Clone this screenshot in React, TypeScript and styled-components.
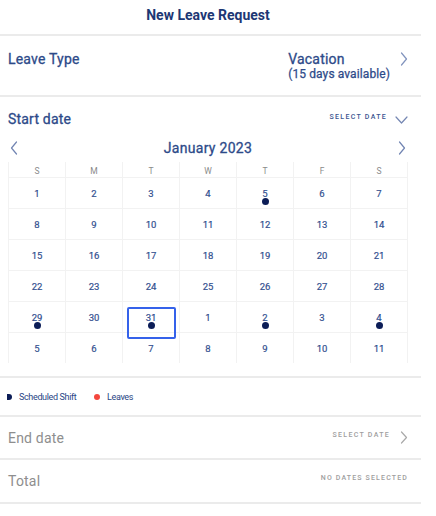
import React from 'react';
import styled, { createGlobalStyle } from 'styled-components';

const Global = createGlobalStyle`
  * { box-sizing: border-box; }
  html, body { margin: 0; padding: 0; background: #fff; }
  body { font-family: Roboto, "Noto Sans", Arial, sans-serif; }
`;

const NAVY = '#2d4a89';
const TITLE = '#1d3774';
const GRAY = '#8e8e8e';
const LINE = '#ebebeb';

const Page = styled.div`
  width: 421px;
  background: #fff;
`;

const Header = styled.header`
  height: 36px;
  padding: 7px 13px 0 8px;
  border-bottom: 2px solid ${LINE};
  display: flex;
  justify-content: center;
  align-items: flex-start;
`;

const Title = styled.h1`
  margin: 0;
  font-size: 14px;
  line-height: 16px;
  font-weight: 700;
  color: ${TITLE};
`;

const LeaveTypeRow = styled.section`
  height: 61px;
  padding: 15px 13px 0 8px;
  border-bottom: 2px solid ${LINE};
  display: flex;
  justify-content: space-between;
  align-items: flex-start;
`;

const Label = styled.span<{ $muted?: boolean }>`
  font-size: 14px;
  line-height: 16px;
  font-weight: 400;
  letter-spacing: 0.2px;
  color: ${(p) => (p.$muted ? GRAY : NAVY)};
  -webkit-text-stroke: ${(p) => (p.$muted ? '0' : `0.3px ${NAVY}`)};
`;

const RightGroup = styled.div<{ $gap: number }>`
  display: flex;
  align-items: flex-start;
  gap: ${(p) => p.$gap}px;
`;

const ValueColumn = styled.div`
  display: flex;
  flex-direction: column;
`;

const ValueMain = styled.span`
  font-size: 14px;
  line-height: 16px;
  font-weight: 400;
  letter-spacing: 0.2px;
  color: ${NAVY};
  -webkit-text-stroke: 0.3px ${NAVY};
`;

const ValueSub = styled.span`
  font-size: 12px;
  line-height: 15px;
  font-weight: 400;
  color: ${NAVY};
  letter-spacing: 0.1px;
  -webkit-text-stroke: 0.25px ${NAVY};
`;

const Caps = styled.span<{ $muted?: boolean }>`
  font-size: 7px;
  line-height: 9px;
  font-weight: 500;
  letter-spacing: 1.3px;
  text-transform: uppercase;
  color: ${(p) => (p.$muted ? '#9e9e9e' : '#3b5590')};
`;

const StartSection = styled.section`
  padding: 0 13px 13px 8px;
  border-bottom: 2px solid ${LINE};
  display: flex;
  flex-direction: column;
`;

const SectionHeader = styled.div`
  height: 41px;
  display: flex;
  justify-content: space-between;
  align-items: center;
  padding-top: 2px;
`;

const MonthNav = styled.div`
  height: 20px;
  margin-bottom: 4px;
  display: flex;
  justify-content: space-between;
  align-items: center;
  padding: 0 2px;
`;

const MonthTitle = styled.span`
  font-size: 14px;
  line-height: 16px;
  font-weight: 400;
  letter-spacing: 0.3px;
  color: ${NAVY};
  -webkit-text-stroke: 0.3px ${NAVY};
`;

const Grid = styled.div`
  width: 400px;
  border-left: 1px solid #f2f2f2;
  display: flex;
  flex-direction: column;
`;

const WeekRow = styled.div<{ $head?: boolean }>`
  display: grid;
  grid-template-columns: repeat(7, 57px);
  height: ${(p) => (p.$head ? 15 : 31)}px;
  border-top: ${(p) => (p.$head ? 'none' : '1px solid #f2f2f2')};
`;

const Cell = styled.div<{ $head?: boolean }>`
  position: relative;
  border-right: 1px solid #f2f2f2;
  display: flex;
  justify-content: center;
  align-items: center;
  padding-top: ${(p) => (p.$head ? 3 : 1)}px;
`;

const WeekDay = styled.span`
  font-size: 8.5px;
  line-height: 10px;
  color: #8a8a8a;
`;

const DayNum = styled.span`
  position: relative;
  font-size: 9.5px;
  line-height: 11px;
  font-weight: 400;
  color: #33508f;
  -webkit-text-stroke: 0.2px #33508f;
`;

const ShiftDot = styled.span`
  position: absolute;
  top: 10px;
  left: 50%;
  width: 7px;
  height: 7px;
  margin-left: -3.5px;
  border-radius: 50%;
  background: #0c1d57;
`;

const SelectedBox = styled.span`
  position: absolute;
  left: 4px;
  top: 5px;
  width: 49px;
  height: 32px;
  border: 2px solid #3562ea;
  border-radius: 2px;
`;

const Legend = styled.section`
  height: 39px;
  padding: 0 13px 0 7px;
  border-bottom: 2px solid ${LINE};
  display: flex;
  align-items: center;
`;

const LegendItem = styled.div<{ $gap: number; $width?: number }>`
  display: flex;
  align-items: center;
  gap: ${(p) => p.$gap}px;
  width: ${(p) => (p.$width ? `${p.$width}px` : 'auto')};
`;

const HalfDot = styled.span`
  width: 5px;
  height: 6px;
  border-radius: 0 3px 3px 0;
  background: #0c1d57;
`;

const RedDot = styled.span`
  width: 6px;
  height: 6px;
  border-radius: 50%;
  background: #f4473d;
`;

const LegendText = styled.span`
  font-size: 9px;
  line-height: 10px;
  letter-spacing: -0.35px;
  color: #2a4585;
`;

const InfoRow = styled.section<{ $h: number }>`
  height: ${(p) => p.$h}px;
  padding: 0 13px 0 8px;
  border-bottom: 2px solid ${LINE};
  display: flex;
  justify-content: space-between;
  align-items: center;
`;

const RaisedCaps = styled(Caps)`
  margin-bottom: 6px;
  letter-spacing: 1.15px;
`;

const ChevronRight = ({ color, w = 8, h = 14 }: { color: string; w?: number; h?: number }) => (
  <svg width={w} height={h} viewBox={`0 0 ${w} ${h}`} fill="none" style={{ display: 'block' }}>
    <polyline
      points={`1.5,1 ${w - 1.5},${h / 2} 1.5,${h - 1}`}
      stroke={color}
      strokeWidth={1.2}
      strokeLinecap="round"
      strokeLinejoin="round"
    />
  </svg>
);

const ChevronLeft = ({ color }: { color: string }) => (
  <svg width={8} height={14} viewBox="0 0 8 14" fill="none" style={{ display: 'block' }}>
    <polyline points="6.5,1 1.5,7 6.5,13" stroke={color} strokeWidth={1.2} strokeLinecap="round" strokeLinejoin="round" />
  </svg>
);

const ChevronDown = ({ color }: { color: string }) => (
  <svg width={13} height={8} viewBox="0 0 13 8" fill="none" style={{ display: 'block', marginTop: 3 }}>
    <polyline points="1,1 6.5,7 12,1" stroke={color} strokeWidth={1.2} strokeLinecap="round" strokeLinejoin="round" />
  </svg>
);

type Day = { n: number; dot?: boolean; selected?: boolean };

const weeks: Day[][] = [
  [1, 2, 3, 4, 5, 6, 7].map((n) => ({ n, dot: n === 5 })),
  [8, 9, 10, 11, 12, 13, 14].map((n) => ({ n })),
  [15, 16, 17, 18, 19, 20, 21].map((n) => ({ n })),
  [22, 23, 24, 25, 26, 27, 28].map((n) => ({ n })),
  [
    { n: 29, dot: true },
    { n: 30 },
    { n: 31, dot: true, selected: true },
    { n: 1 },
    { n: 2, dot: true },
    { n: 3 },
    { n: 4, dot: true },
  ],
  [5, 6, 7, 8, 9, 10, 11].map((n) => ({ n })),
];

const weekDays = ['S', 'M', 'T', 'W', 'T', 'F', 'S'];

export default function App() {
  return (
    <Page>
      <Global />
      <Header>
        <Title>New Leave Request</Title>
      </Header>

      <LeaveTypeRow>
        <Label>Leave Type</Label>
        <RightGroup $gap={10}>
          <ValueColumn>
            <ValueMain>Vacation</ValueMain>
            <ValueSub>(15 days available)</ValueSub>
          </ValueColumn>
          <span style={{ marginTop: 1 }}>
            <ChevronRight color="#8193bd" />
          </span>
        </RightGroup>
      </LeaveTypeRow>

      <StartSection>
        <SectionHeader>
          <Label>Start date</Label>
          <RightGroup $gap={8}>
            <Caps>Select date</Caps>
            <ChevronDown color="#7587b3" />
          </RightGroup>
        </SectionHeader>
        <MonthNav>
          <ChevronLeft color="#7184b2" />
          <MonthTitle>January 2023</MonthTitle>
          <ChevronRight color="#7184b2" />
        </MonthNav>
        <Grid>
          <WeekRow $head>
            {weekDays.map((d, i) => (
              <Cell $head key={i}>
                <WeekDay>{d}</WeekDay>
              </Cell>
            ))}
          </WeekRow>
          {weeks.map((week, wi) => (
            <WeekRow key={wi}>
              {week.map((day, di) => (
                <Cell key={di}>
                  {day.selected && <SelectedBox />}
                  <DayNum>
                    {day.n}
                    {day.dot && <ShiftDot />}
                  </DayNum>
                </Cell>
              ))}
            </WeekRow>
          ))}
        </Grid>
      </StartSection>

      <Legend>
        <LegendItem $gap={7} $width={87}>
          <HalfDot />
          <LegendText>Scheduled Shift</LegendText>
        </LegendItem>
        <LegendItem $gap={7}>
          <RedDot />
          <LegendText>Leaves</LegendText>
        </LegendItem>
      </Legend>

      <InfoRow $h={43}>
        <Label $muted>End date</Label>
        <RightGroup $gap={10}>
          <Caps $muted>Select date</Caps>
          <ChevronRight color="#a9a9a9" w={8} h={13} />
        </RightGroup>
      </InfoRow>

      <InfoRow $h={44}>
        <Label $muted>Total</Label>
        <RaisedCaps $muted>No dates selected</RaisedCaps>
      </InfoRow>
    </Page>
  );
}
